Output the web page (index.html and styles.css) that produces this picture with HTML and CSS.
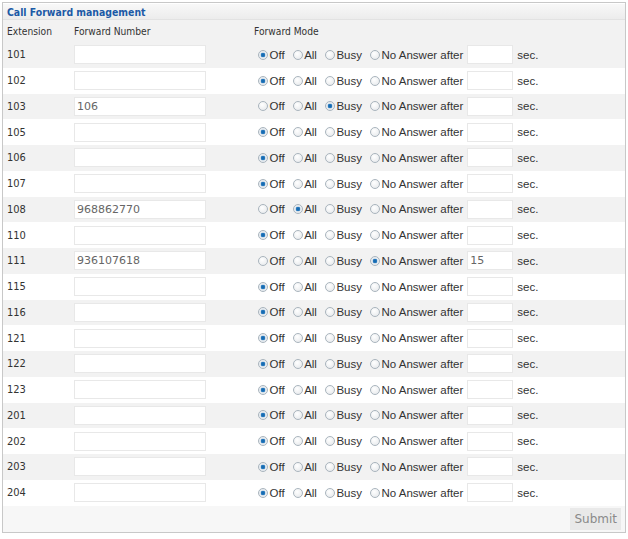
FILE: index.html
```html
<!DOCTYPE html>
<html>
<head>
<meta charset="utf-8">
<link rel="stylesheet" href="styles.css">
</head>
<body>
<div class="panel">
  <div class="title">Call Forward management</div>
  <div class="row head">
    <div class="c-ext">Extension</div>
    <div class="c-num">Forward Number</div>
    <div class="c-mode">Forward Mode</div>
  </div>
  <div id="rows"></div>
  <div class="foot"><button class="submit">Submit</button></div>
</div>
<script src="app.js"></script>
</body>
</html>
```
FILE: app.js
```js
var data = [
  ["101","",0,""],["102","",0,""],["103","106",2,""],["105","",0,""],
  ["106","",0,""],["107","",0,""],["108","968862770",1,""],["110","",0,""],
  ["111","936107618",3,"15"],["115","",0,""],["116","",0,""],["121","",0,""],
  ["122","",0,""],["123","",0,""],["201","",0,""],["202","",0,""],
  ["203","",0,""],["204","",0,""]
];
var labels = ["Off","All","Busy","No Answer after"];
var html = "";
data.forEach(function (d, i) {
  html += '<div class="row ' + (i % 2 ? "odd" : "even") + '">';
  html += '<div class="c-ext">' + d[0] + '</div>';
  html += '<div class="c-num"><input class="txt num" type="text" value="' + d[1] + '"></div>';
  html += '<div class="c-mode">';
  labels.forEach(function (l, k) {
    html += '<label class="opt"><input type="radio" name="m' + d[0] + '"' + (d[2] === k ? " checked" : "") + '><span>' + l + '</span></label>';
  });
  html += '<input class="txt sec" type="text" value="' + d[3] + '"><span class="unit">sec.</span>';
  html += '</div></div>';
});
document.getElementById("rows").innerHTML = html;
```
FILE: styles.css
```css
html, body { margin: 0; padding: 0; background: #fff; }
body { font-family: "Liberation Sans", Arial, sans-serif; font-size: 11.5px; color: #333; }
.panel {
  margin: 2px 0 0 2px;
  width: 622px;
  height: 529px;
  border: 1px solid #c8c8c8;
  background: #f2f2f2;
  display: flex;
  flex-direction: column;
}
.title {
  height: 14px;
  line-height: 15px;
  padding: 1px 0 0 4px;
  font-weight: bold;
  font-size: 10.4px;
  font-family: "DejaVu Sans Condensed", "DejaVu Sans", sans-serif;
  color: #1c5aa6;
  background: linear-gradient(#f8f8f8, #ececec);
  border-top: 1px solid #fff;
  border-bottom: 1px solid #e2e2e2;
}
.row {
  display: flex;
  align-items: center;
  height: 25.75px;
}
.row.head { height: 22px; color: #333; }
.head .c-ext, .head .c-num, .head .c-mode { font-size: 10.2px; font-family: "DejaVu Sans Condensed", "DejaVu Sans", sans-serif; }
.row.even { background: #f2f2f2; }
.row.odd { background: #fff; }
.c-ext { width: 67px; padding-left: 4px; font-size: 11px; font-family: "DejaVu Sans Condensed", "DejaVu Sans", sans-serif; }
.c-num { width: 184px; }
.head .c-mode { margin-left: -4px; }
.c-mode { display: flex; align-items: center; flex: 1; }
.txt {
  box-sizing: border-box;
  height: 19px;
  border: 1px solid #e8e8e8;
  background: #fff;
  padding: 0 2px;
  font-family: "DejaVu Sans", Verdana, sans-serif;
  font-size: 11px;
  color: #666;
  outline: none;
}
.txt.num { width: 132px; }
.txt.sec { width: 46px; margin-left: 4px; }
.opt { display: flex; align-items: center; margin-right: 8px; }
.opt:last-of-type { margin-right: 0; }
.opt input {
  -webkit-appearance: none;
  appearance: none;
  width: 10px;
  height: 10px;
  margin: 0 1.5px 0 0;
  border-radius: 50%;
  border: 1px solid #a9b4bd;
  background: radial-gradient(circle at 40% 35%, #fff, #e3e6e9);
  box-sizing: border-box;
}
.opt input:checked {
  background: radial-gradient(circle, #0d63a8 0, #2a7bc0 2px, #dfe6ec 2.6px, #f4f6f8 5px);
}
.opt span { color: #333; }
.unit { margin-left: 4px; }
.foot {
  flex: 1;
  background: #f7f7f7;
  display: flex;
  justify-content: flex-end;
  align-items: center;
  padding-right: 4px;
}
.submit {
  border: none;
  background: #e9e9e9;
  color: #8a8a8a;
  font-family: "DejaVu Sans", Verdana, sans-serif;
  font-size: 12px;
  height: 22px;
  padding: 0 4px;
}
```
